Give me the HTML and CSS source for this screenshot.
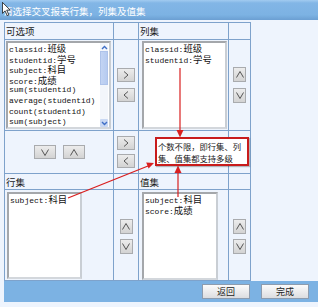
FILE: index.html
```html
<!DOCTYPE html>
<html lang="zh">
<head>
  <meta charset="UTF-8" />
  <title>交叉报表设置</title>
  <link rel="stylesheet" href="styles.css">
</head>
<body>
  <div class="titlebar">请选择交叉报表行集，列集及值集</div>

  <div class="grid">
    <!-- row 1 -->
    <div class="cell head">可选项</div>
    <div class="cell"></div>
    <div class="cell head">列集</div>
    <div class="cell"></div>

    <!-- row 2 -->
    <div class="cell">
      <div class="listbox lb-source">
        <div class="items">
          <div class="item">classid:<span class="cn">班级</span></div>
          <div class="item">studentid:<span class="cn">学号</span></div>
          <div class="item">subject:<span class="cn">科目</span></div>
          <div class="item">score:<span class="cn">成绩</span></div>
          <div class="item">sum(studentid)</div>
          <div class="item">average(studentid)</div>
          <div class="item">count(studentid)</div>
          <div class="item">sum(subject)</div>
        </div>
        <div class="scrollbar">
          <div class="sb-arrow">
            <svg width="7" height="5" viewBox="0 0 7 5"><polyline points="1,4 3.5,1.5 6,4" fill="none" stroke="#3f6fc6" stroke-width="1.4"/></svg>
          </div>
          <div class="sb-thumb"></div>
          <div class="sb-track"></div>
          <div class="sb-arrow sb-down">
            <svg width="7" height="5" viewBox="0 0 7 5"><polyline points="1,1 3.5,3.5 6,1" fill="none" stroke="#3f6fc6" stroke-width="1.4"/></svg>
          </div>
        </div>
      </div>
    </div>
    <div class="cell btns">
      <button class="btn btn-wide"><svg width="6" height="8" viewBox="0 0 6 8"><polyline points="1,0.5 5,4 1,7.5" fill="none" stroke="#555" stroke-width="1"/></svg></button>
      <button class="btn btn-wide"><svg width="6" height="8" viewBox="0 0 6 8"><polyline points="5,0.5 1,4 5,7.5" fill="none" stroke="#555" stroke-width="1"/></svg></button>
    </div>
    <div class="cell">
      <div class="listbox lb-cols">
        <div class="items">
          <div class="item">classid:<span class="cn">班级</span></div>
          <div class="item">studentid:<span class="cn">学号</span></div>
        </div>
      </div>
    </div>
    <div class="cell btns">
      <button class="btn btn-tall"><svg width="8" height="7" viewBox="0 0 8 7"><polyline points="0.5,6.5 4,0.5 7.5,6.5" fill="none" stroke="#555" stroke-width="1"/></svg></button>
      <button class="btn btn-tall"><svg width="8" height="7" viewBox="0 0 8 7"><polyline points="0.5,0.5 4,6.5 7.5,0.5" fill="none" stroke="#555" stroke-width="1"/></svg></button>
    </div>

    <!-- row 3 -->
    <div class="cell btns btns-row">
      <button class="btn btn-flat"><svg width="8" height="7" viewBox="0 0 8 7"><polyline points="0.5,0.5 4,6.5 7.5,0.5" fill="none" stroke="#555" stroke-width="1"/></svg></button>
      <button class="btn btn-flat"><svg width="8" height="7" viewBox="0 0 8 7"><polyline points="0.5,6.5 4,0.5 7.5,6.5" fill="none" stroke="#555" stroke-width="1"/></svg></button>
    </div>
    <div class="cell btns btns-tight">
      <button class="btn btn-wide"><svg width="6" height="8" viewBox="0 0 6 8"><polyline points="1,0.5 5,4 1,7.5" fill="none" stroke="#555" stroke-width="1"/></svg></button>
      <button class="btn btn-wide"><svg width="6" height="8" viewBox="0 0 6 8"><polyline points="5,0.5 1,4 5,7.5" fill="none" stroke="#555" stroke-width="1"/></svg></button>
    </div>
    <div class="cell"></div>
    <div class="cell"></div>

    <!-- row 4 -->
    <div class="cell head">行集</div>
    <div class="cell"></div>
    <div class="cell head">值集</div>
    <div class="cell"></div>

    <!-- row 5 -->
    <div class="cell">
      <div class="listbox lb-rows">
        <div class="items">
          <div class="item">subject:<span class="cn">科目</span></div>
        </div>
      </div>
    </div>
    <div class="cell btns btns-low">
      <button class="btn btn-tall"><svg width="8" height="7" viewBox="0 0 8 7"><polyline points="0.5,6.5 4,0.5 7.5,6.5" fill="none" stroke="#555" stroke-width="1"/></svg></button>
      <button class="btn btn-tall"><svg width="8" height="7" viewBox="0 0 8 7"><polyline points="0.5,0.5 4,6.5 7.5,0.5" fill="none" stroke="#555" stroke-width="1"/></svg></button>
    </div>
    <div class="cell">
      <div class="listbox lb-values">
        <div class="items">
          <div class="item">subject:<span class="cn">科目</span></div>
          <div class="item">score:<span class="cn">成绩</span></div>
        </div>
      </div>
    </div>
    <div class="cell btns btns-low">
      <button class="btn btn-tall"><svg width="8" height="7" viewBox="0 0 8 7"><polyline points="0.5,6.5 4,0.5 7.5,6.5" fill="none" stroke="#555" stroke-width="1"/></svg></button>
      <button class="btn btn-tall"><svg width="8" height="7" viewBox="0 0 8 7"><polyline points="0.5,0.5 4,6.5 7.5,0.5" fill="none" stroke="#555" stroke-width="1"/></svg></button>
    </div>
  </div>

  <div class="footer">
    <button class="action">返回</button>
    <button class="action">完成</button>
  </div>

  <!-- red annotations drawn over the dialog -->
  <svg class="notes" width="318" height="307" viewBox="0 0 318 307">
    <g stroke="#d91f1f" stroke-width="1.2" fill="none">
      <line x1="180" y1="68" x2="180" y2="131"/>
      <line x1="178" y1="197" x2="178" y2="172"/>
      <line x1="68" y1="198" x2="148" y2="166"/>
    </g>
    <g fill="#d91f1f">
      <polygon points="176.5,130 183.5,130 180,137.5"/>
      <polygon points="174.5,173 181.5,173 178,165.5"/>
      <polygon points="154,163 148.6,168.6 146.2,162.6"/>
    </g>
  </svg>
  <div class="callout">个数不限，即行集、列<br>集、值集都支持多级</div>

  <svg class="cursor" width="9" height="14" viewBox="0 0 12 19">
    <path d="M0.5,0.5 L0.5,15.5 L4,12 L7,18.5 L9.2,17.5 L6.3,11 L11,11 Z" fill="#fff" stroke="#000" stroke-width="1"/>
  </svg>
</body>
</html>
```

FILE: styles.css
```css
body {
  margin: 0;
  width: 318px;
  height: 307px;
  position: relative;
  overflow: hidden;
  background: #eef4fd;
  font-family: "Noto Sans CJK SC", sans-serif;
  color: #1a1a1a;
}

.titlebar {
  height: 20px;
  box-sizing: border-box;
  padding: 3px 0 0 3px;
  line-height: 17px;
  font-size: 9.5px;
  color: #fff;
  background: linear-gradient(#a2cbf0 0, #82b6e6 3px, #7cb2e3 15px, #6b9fd2 20px);
}

.grid {
  display: grid;
  grid-template-columns: 108px 24px 89px 21px;
  grid-template-rows: 16px 90px 42px 15px 90px;
  gap: 1px;
  width: max-content;
  margin: 2px 0 0 4px;
  background: #7ea2cb;
  border: 1px solid #7ea2cb;
}

.cell {
  background: #eef4fd;
}

.head {
  padding-left: 1px;
  font-size: 9.5px;
  line-height: 16px;
  color: #1a1a1a;
}

.btns {
  display: flex;
  flex-direction: column;
  align-items: center;
  justify-content: center;
  gap: 6px;
}

.btns-row {
  flex-direction: row;
  gap: 7px;
}

.btns-tight {
  gap: 4px;
}

.btns-low {
  gap: 5px;
  padding-top: 2px;
}

.btn {
  margin: 0;
  padding: 0;
  display: flex;
  align-items: center;
  justify-content: center;
  background: linear-gradient(#ececec, #d3d3d3);
  border: 1px solid #a9abae;
  box-sizing: border-box;
}

.btn-wide { width: 18px; height: 14px; }
.btn-tall { width: 13px; height: 15px; }
.btn-flat { width: 22px; height: 14px; }

.listbox {
  display: flex;
  box-sizing: border-box;
  background: #fff;
  border: 2px solid;
  border-color: #a4a7ab #c9ced4 #d3d7dc #a4a7ab;
}

.lb-source { width: 105px; height: 88px; margin: 1px 0 0 1px; }
.lb-cols   { width: 85px;  height: 88px; margin: 1px 0 0 3px; }
.lb-rows   { width: 75px;  height: 87px; margin: 2px 0 0 2px; }
.lb-values { width: 76px;  height: 88px; margin: 2px 0 0 3px; }

.items {
  flex: 1;
  padding: 0 0 0 1px;
}

.item {
  height: 10.6px;
  line-height: 10.6px;
  font-family: "Liberation Mono", monospace;
  font-size: 8px;
  color: #111;
  white-space: nowrap;
}

.item .cn {
  font-family: "Noto Sans CJK SC", sans-serif;
  font-size: 9.4px;
}

.scrollbar {
  width: 8px;
  margin-right: 1px;
  display: flex;
  flex-direction: column;
  background: #f3f6fb;
}

.sb-arrow {
  height: 8px;
  display: flex;
  align-items: center;
  justify-content: center;
}

.sb-down {
  background: #c9d8f3;
  border-radius: 1px;
}

.sb-thumb {
  height: 34px;
  background: linear-gradient(to right, #c3d4f3, #b6cbf0);
  border: 1px solid #aec3ea;
  box-sizing: border-box;
}

.sb-track {
  flex: 1;
}

.footer {
  height: 21px;
  margin-left: 4px;
  display: flex;
  justify-content: flex-end;
  align-items: center;
  gap: 11px;
  padding-right: 9px;
  background: #7cb2e3;
}

.action {
  width: 48px;
  height: 15px;
  margin: 0;
  padding: 0;
  font-family: "Noto Sans CJK SC", sans-serif;
  font-size: 9px;
  line-height: 13px;
  color: #222;
  background: linear-gradient(#fbfbfb, #dcdde0);
  border: 1px solid #8d9cae;
}

.notes {
  position: absolute;
  top: 0;
  left: 0;
  pointer-events: none;
}

.callout {
  position: absolute;
  left: 155px;
  top: 137px;
  width: 94px;
  height: 29px;
  box-sizing: border-box;
  padding: 1px 0 0 1px;
  background: #fff;
  border: 2px solid #c81c1c;
  box-shadow: 1px 1px 1px rgba(0, 0, 0, 0.25);
  font-size: 8.3px;
  line-height: 12px;
  color: #1a1a1a;
  white-space: nowrap;
}

.cursor {
  position: absolute;
  left: 2px;
  top: 2px;
}
```
